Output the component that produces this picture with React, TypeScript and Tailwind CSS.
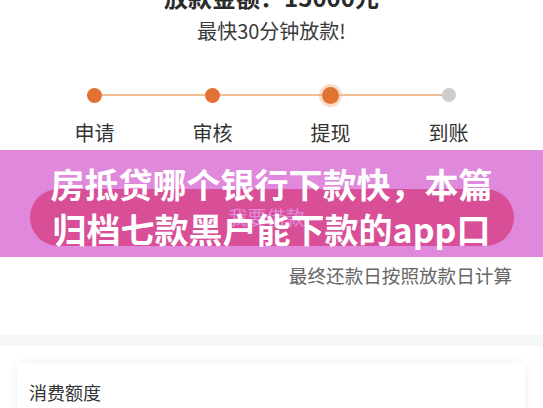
import React from "react";

const steps = [
  { label: "申请", state: "done" },
  { label: "审核", state: "done" },
  { label: "提现", state: "current" },
  { label: "到账", state: "todo" },
];

function StepDot({ state }: { state: string }) {
  if (state === "current") {
    return (
      <div className="w-[17px] h-[17px] rounded-full bg-[#e07232] shadow-[0_0_0_3px_rgba(240,160,110,0.35)]" />
    );
  }
  if (state === "todo") {
    return <div className="w-[14px] h-[14px] rounded-full bg-[#cdcdcd]" />;
  }
  return <div className="w-[15px] h-[15px] rounded-full bg-[#e07232]" />;
}

export default function App() {
  return (
    <div
      className="relative w-full h-[408px] overflow-hidden bg-white text-[#333]"
      style={{ fontFamily: '"Noto Sans CJK SC", "Noto Sans", sans-serif' }}
    >
      {/* Amount header */}
      <div className="mt-[-19px] h-[32px] text-center text-[24px] leading-[32px] font-bold text-[#2a2a2a]">
        放款金额：15000元
      </div>
      <div className="mt-[4px] text-center text-[20px] leading-[28px] text-[#3a3a3a]">
        最快30分钟放款!
      </div>

      {/* Progress steps */}
      <div className="mx-auto mt-[38px] w-[472px] grid grid-cols-4">
        {steps.map((s, i) => (
          <div key={s.label} className="flex flex-col items-center">
            <div className="flex items-center w-full h-[24px]">
              <div className={i === 0 ? "flex-1 h-[2px]" : "flex-1 h-[2px] bg-[#f2bd92]"} />
              <StepDot state={s.state} />
              <div className={i === steps.length - 1 ? "flex-1 h-[2px]" : "flex-1 h-[2px] bg-[#f2bd92]"} />
            </div>
            <div className="mt-[12px] text-[20px] leading-[28px] text-[#333]">{s.label}</div>
          </div>
        ))}
      </div>

      {/* Loan button */}
      <div className="mx-auto mt-[42px] w-[484px] h-[57px] rounded-full bg-[#ea5230] flex items-center justify-center pr-[10px] text-white text-[19px]">
        我要借款
      </div>

      <div className="mt-[16px] pr-[31px] text-right text-[18.6px] leading-[26px] text-[#666]">
        最终还款日按照放款日计算
      </div>

      <div className="mt-[47px] h-[11px] bg-[#f5f6f8]" />

      {/* Quota card */}
      <div className="mt-[17px] ml-[17px] mr-[18px] h-[80px] rounded-[4px] bg-white shadow-[0_0_10px_rgba(0,0,0,0.07)] pl-[12px] pt-[16px]">
        <div className="text-[18px] leading-[26px] text-[#333]">消费额度</div>
      </div>

      {/* Title overlay band */}
      <div className="absolute left-0 right-0 top-[150px] h-[107px] bg-[rgba(209,78,203,0.67)] pt-[11px] text-center text-white font-bold text-[34px] leading-[45px]">
        <div>房抵贷哪个银行下款快，本篇</div>
        <div>归档七款黑户能下款的app口</div>
      </div>
    </div>
  );
}
